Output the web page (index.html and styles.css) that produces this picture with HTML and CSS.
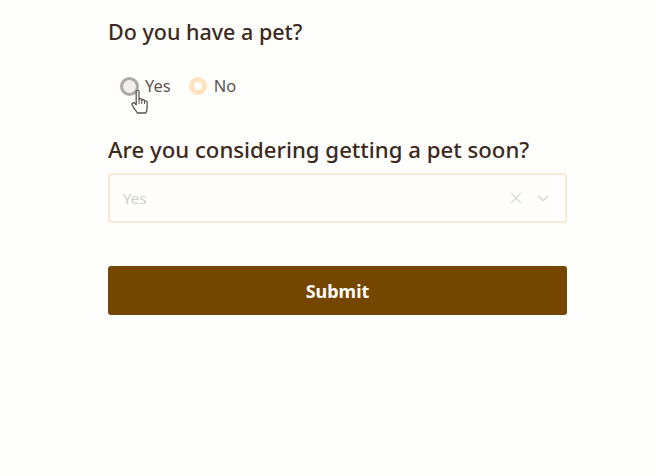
FILE: index.html
```html
<!DOCTYPE html>
<html lang="en">
<head>
    <meta charset="UTF-8">
    <title>Pet form</title>
    <link rel="stylesheet" href="styles.css">
</head>
<body>
    <form class="pet-form">
        <h2 class="question">Do you have a pet?</h2>
        <div class="radio-group">
            <label class="radio-option">
                <span class="radio radio-hover"></span>
                <span>Yes</span>
                <svg class="cursor" width="20" height="28" viewBox="0 0 20 28">
                    <path d="M5.2 2.6c0-1.7 2.8-1.7 2.8 0v8.2c.2-1.5 2.7-1.5 2.8.1v.6c.3-1.3 2.6-1.2 2.7.3v.8c.4-1.1 2.6-.9 2.6.7v5.4c0 2.6-.4 3.700-1.300 5.300H6.400c-.9-1.500-2.100-3-3.600-5L1.300 16c-1-1.600 1-3 2.400-1.700l1.500 1.500z" fill="#fff" stroke="#5a5350" stroke-width="1.300" stroke-linejoin="round"/>
                    <path d="M8 11v4M10.800 11.500V15M13.500 12.600V15" fill="none" stroke="#5a5350" stroke-width="1"/>
                </svg>
            </label>
            <label class="radio-option">
                <span class="radio radio-checked"></span>
                <span>No</span>
            </label>
        </div>

        <h2 class="question question-long">Are you considering getting a pet soon?</h2>
        <div class="select-box">
            <span class="select-value">Yes</span>
            <svg class="select-icon" width="14" height="14" viewBox="0 0 14 14">
                <path d="M2 2l10 10M12 2L2 12" fill="none" stroke="#d9d9d7" stroke-width="1.300"/>
            </svg>
            <svg class="select-icon" width="14" height="14" viewBox="0 0 14 14">
                <path d="M2 5l5 4.500L12 5" fill="none" stroke="#d9d9d7" stroke-width="1.500"/>
            </svg>
        </div>

        <button type="button" class="submit-btn">Submit</button>
    </form>
</body>
</html>
```

FILE: styles.css
```css
body {
    margin: 0;
    background: #fefefc;
    color: #3c2a21;
    font-family: "Noto Sans", "Open Sans", sans-serif;
}

.pet-form {
    width: 459px;
    margin-left: 108px;
    padding-top: 18px;
}

.question {
    margin: 0;
    font-size: 21.500px;
    line-height: 27px;
    font-weight: 500;
    color: #3c2a21;
}

.question-long {
    font-size: 22.200px;
}

.radio-group {
    display: flex;
    gap: 18px;
    margin-top: 29px;
    margin-left: 12px;
    margin-bottom: 38px;
}

.radio-option {
    position: relative;
    display: flex;
    align-items: center;
    gap: 6px;
    font-size: 16.500px;
    line-height: 24px;
    color: #5f5550;
}

.radio {
    width: 18px;
    height: 18px;
    box-sizing: border-box;
    border-radius: 50%;
}

.radio-hover {
    width: 19px;
    height: 19px;
    border: 3px solid #aeaaa8;
    background: #efefee;
}

.radio-checked {
    margin-right: 1px;
    border: 5px solid #fbe3bd;
    background: #fffdf8;
}

.cursor {
    position: absolute;
    left: 11px;
    top: 15px;
}

.select-box {
    display: flex;
    align-items: center;
    gap: 13px;
    height: 50px;
    box-sizing: border-box;
    margin-top: 10px;
    padding: 0 15px 0 13px;
    border: 2px solid #f9e8d2;
    border-radius: 3px;
    background: #fffefc;
}

.select-value {
    flex: 1;
    font-size: 15px;
    color: #cfcecc;
}

.submit-btn {
    display: block;
    width: 100%;
    height: 49px;
    margin-top: 43px;
    border: none;
    border-radius: 3px;
    background: #744600;
    color: #fff;
    font-family: inherit;
    font-size: 18px;
    font-weight: 700;
}
```
